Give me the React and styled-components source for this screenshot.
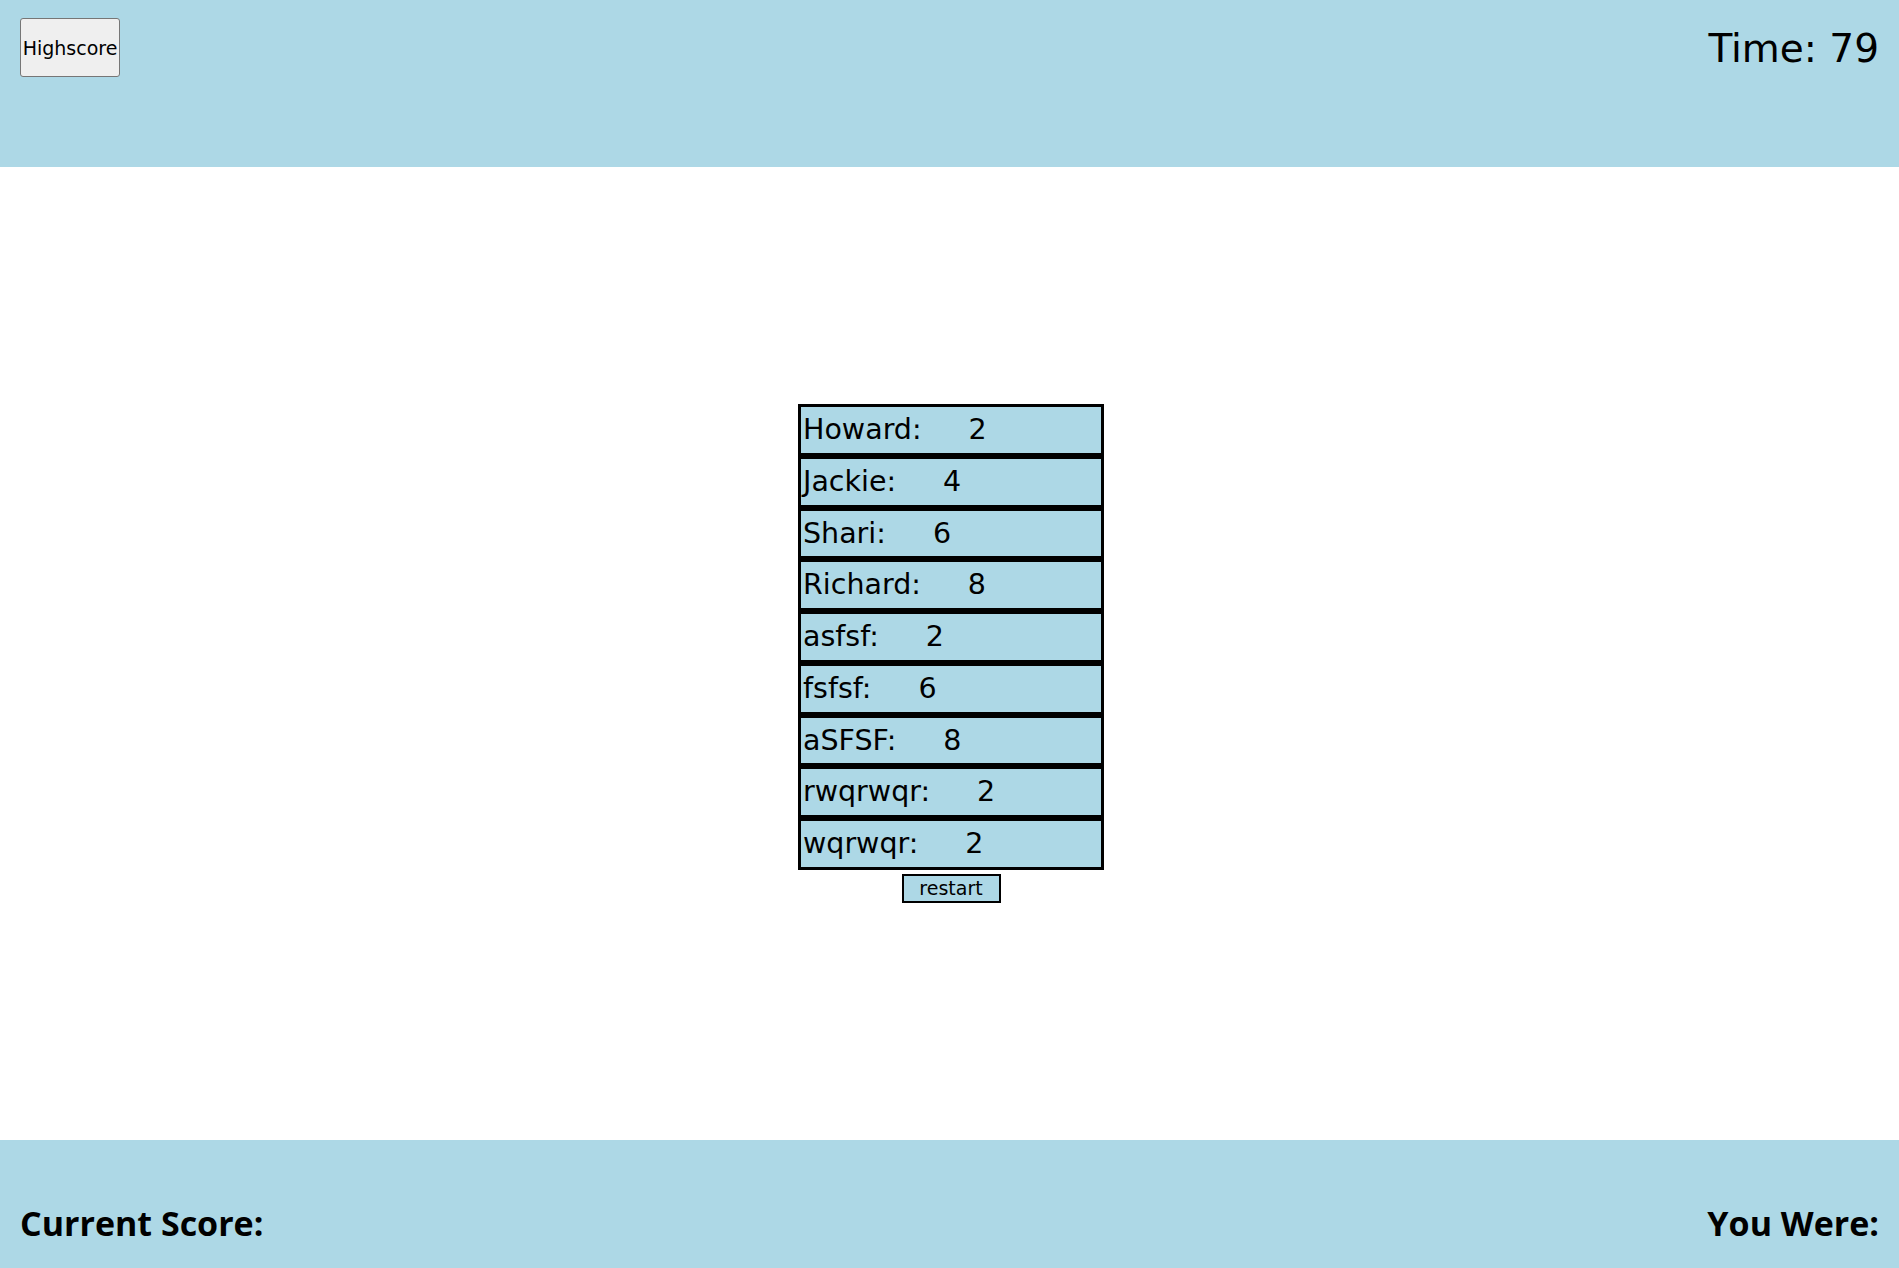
import React from 'react';
import styled, { createGlobalStyle } from 'styled-components';

const GlobalStyle = createGlobalStyle`
  html, body {
    margin: 0;
    padding: 0;
    background: #fff;
    font-family: "DejaVu Sans", "Liberation Sans", sans-serif;
  }
`;

const Page = styled.div`
  display: flex;
  flex-direction: column;
  min-height: 100vh;
`;

const Header = styled.header`
  display: flex;
  justify-content: space-between;
  align-items: flex-start;
  height: 167px;
  padding: 0 20px;
  box-sizing: border-box;
  background-color: lightblue;
`;

const HighscoreButton = styled.button`
  margin-top: 18px;
  width: 100px;
  height: 59px;
  padding: 0;
  font-family: "DejaVu Sans", sans-serif;
  font-size: 19px;
  color: #000;
  background: #efefef;
  border: 1px solid #767676;
  border-radius: 3px;
`;

const Timer = styled.div`
  margin-top: 29px;
  font-size: 39px;
  line-height: 39px;
  color: #000;
`;

const Main = styled.main`
  flex: 1;
  display: flex;
  flex-direction: column;
  align-items: center;
  justify-content: center;
  padding-left: 3px;
`;

const Board = styled.ul`
  list-style: none;
  margin: 0;
  padding: 0;
  width: 306px;
`;

const Row = styled.li`
  display: flex;
  height: 45.8px;
  line-height: 45.8px;
  padding-left: 2px;
  border: 3px solid #000;
  background-color: lightblue;
  font-size: 28.5px;
  color: #000;
  white-space: nowrap;
`;

const Score = styled.span`
  margin-left: 47px;
`;

const RestartButton = styled.button`
  margin-top: 4px;
  width: 99px;
  height: 29px;
  padding: 0;
  font-family: "DejaVu Sans", sans-serif;
  font-size: 19px;
  line-height: 25px;
  color: #000;
  background-color: lightblue;
  border: 2px solid #000;
  border-radius: 0;
`;

const Footer = styled.footer`
  display: flex;
  justify-content: space-between;
  height: 128px;
  padding: 63px 20px 0;
  box-sizing: border-box;
  background-color: lightblue;
`;

const FooterLabel = styled.h2`
  margin: 0;
  font-family: "Open Sans", "DejaVu Sans", sans-serif;
  font-weight: 700;
  font-size: 34px;
  line-height: 40px;
  color: #000;
`;

const scores = [
  { name: 'Howard', score: 2 },
  { name: 'Jackie', score: 4 },
  { name: 'Shari', score: 6 },
  { name: 'Richard', score: 8 },
  { name: 'asfsf', score: 2 },
  { name: 'fsfsf', score: 6 },
  { name: 'aSFSF', score: 8 },
  { name: 'rwqrwqr', score: 2 },
  { name: 'wqrwqr', score: 2 },
];

const App = () => (
  <>
    <GlobalStyle />
    <Page>
      <Header>
        <HighscoreButton>Highscore</HighscoreButton>
        <Timer>Time: 79</Timer>
      </Header>
      <Main>
        <Board>
          {scores.map((s, i) => (
            <Row key={i}>
              {s.name}:<Score>{s.score}</Score>
            </Row>
          ))}
        </Board>
        <RestartButton>restart</RestartButton>
      </Main>
      <Footer>
        <FooterLabel>Current Score:</FooterLabel>
        <FooterLabel>You Were:</FooterLabel>
      </Footer>
    </Page>
  </>
);

export default App;
